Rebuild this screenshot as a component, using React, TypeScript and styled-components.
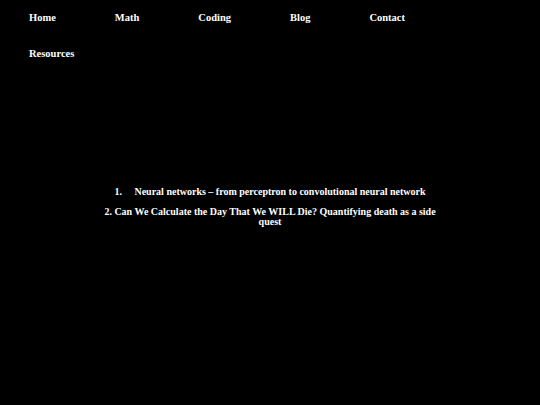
import React from "react";
import styled, { createGlobalStyle } from "styled-components";

const GlobalStyle = createGlobalStyle`
  html, body {
    margin: 0;
    padding: 0;
    background: #000;
    color: #fff;
    font-family: "Liberation Serif", "DejaVu Serif", serif;
  }
`;

const Page = styled.div`
  width: 540px;
  min-height: 405px;
  background: #000;
  box-sizing: border-box;
`;

const Nav = styled.nav`
  display: flex;
  flex-wrap: wrap;
  column-gap: 59px;
  row-gap: 22px;
  padding: 11px 0 0 29px;
  width: 420px;
`;

const NavLink = styled.a`
  color: #fff;
  text-decoration: none;
  font-size: 10.5px;
  font-weight: bold;
  line-height: 14px;
`;

const Main = styled.main`
  display: flex;
  justify-content: center;
  padding-top: 126px;
`;

const List = styled.ol`
  margin: 0;
  padding: 0;
  width: 338px;
  list-style-position: inside;
  text-align: center;
  font-size: 10px;
  font-weight: bold;
`;

const Item = styled.li`
  line-height: 10px;
  margin-bottom: 10px;
`;

const links = ["Home", "Math", "Coding", "Blog", "Contact", "Resources"];

const posts = [
  "\u00a0\u00a0\u00a0\u00a0Neural networks \u2013 from perceptron to convolutional neural network",
  "Can We Calculate the Day That We WILL Die? Quantifying death as a side quest",
];

const App = () => {
  return (
    <Page>
      <GlobalStyle />
      <Nav>
        {links.map((l) => (
          <NavLink key={l} href="#">
            {l}
          </NavLink>
        ))}
      </Nav>
      <Main>
        <List>
          {posts.map((p) => (
            <Item key={p}>{p}</Item>
          ))}
        </List>
      </Main>
    </Page>
  );
};

export default App;
